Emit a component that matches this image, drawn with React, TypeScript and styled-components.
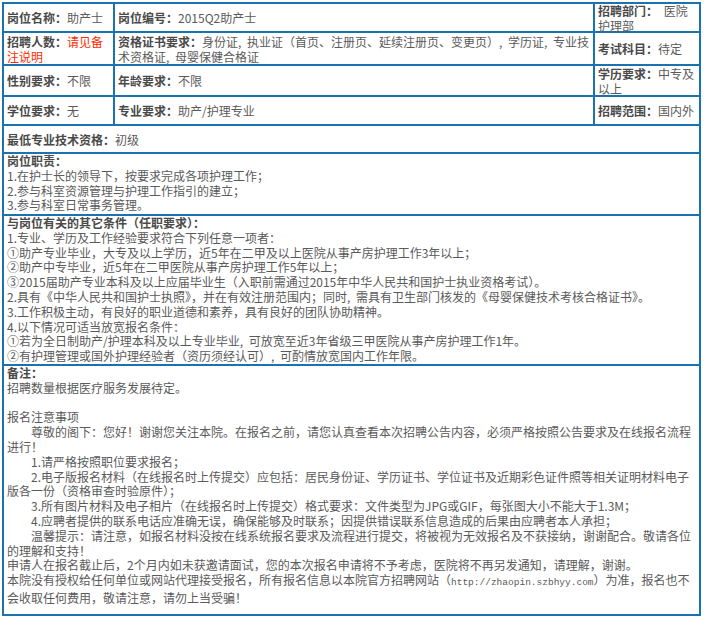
import React from "react";
import styled, { createGlobalStyle } from "styled-components";

const Global = createGlobalStyle`
  html, body { margin: 0; padding: 0; background: #fff; }
  body {
    font-family: "Noto Sans CJK SC", "Noto Sans", sans-serif;
    font-size: 12px;
    color: #555;
    word-spacing: 3px;
  }
`;

const Page = styled.div`
  padding: 2px;
`;

const Sheet = styled.div`
  display: grid;
  grid-template-columns: 109px 478px 104px;
  grid-template-rows: 27px 31px 29px 27px 26px 60px 148px 248px;
  gap: 2px;
  padding: 2px;
  width: max-content;
  background: #1a72b0;
`;

const Cell = styled.div<{ $wide?: boolean; $top?: boolean }>`
  grid-column: ${(p) => (p.$wide ? "1 / -1" : "auto")};
  background: #fff;
  display: flex;
  align-items: ${(p) => (p.$top ? "flex-start" : "center")};
  padding: 0 3px;
  min-width: 0;
  overflow: visible;
`;

const CellText = styled.div`
  line-height: 15px;
  width: 100%;
`;

const Block = styled.div`
  line-height: 14.8px;
  width: 100%;
`;

const Label = styled.span`
  font-weight: 700;
  color: #4a4a4a;
`;

const Value = styled.span<{ $red?: boolean }>`
  color: ${(p) => (p.$red ? "#ff2a00" : "#5a5a5a")};
`;

const Line = styled.div<{ $indent?: boolean }>`
  color: #5a5a5a;
  text-indent: ${(p) => (p.$indent ? "24px" : "0")};
  min-height: 14.8px;
`;

const Url = styled.span`
  font-family: "Liberation Mono", monospace;
  font-size: 9.5px;
  word-spacing: 0;
`;

const Field = ({ label, value, red }: { label: string; value: React.ReactNode; red?: boolean }) => (
  <CellText>
    <Label>{label}</Label>
    <Value $red={red}>{value}</Value>
  </CellText>
);

export default function App() {
  return (
    <Page>
      <Global />
      <Sheet>
        <Cell><Field label="岗位名称：" value="助产士" /></Cell>
        <Cell><Field label="岗位编号：" value="2015Q2助产士" /></Cell>
        <Cell><Field label="招聘部门： " value="医院护理部" /></Cell>

        <Cell><Field label="招聘人数：" value="请见备注说明" red /></Cell>
        <Cell>
          <Field
            label="资格证书要求："
            value="身份证, 执业证（首页、注册页、延续注册页、变更页）, 学历证, 专业技术资格证, 母婴保健合格证"
          />
        </Cell>
        <Cell><Field label="考试科目：" value="待定" /></Cell>

        <Cell><Field label="性别要求：" value="不限" /></Cell>
        <Cell><Field label="年龄要求：" value="不限" /></Cell>
        <Cell><Field label="学历要求：" value="中专及以上" /></Cell>

        <Cell><Field label="学位要求：" value="无" /></Cell>
        <Cell><Field label="专业要求：" value="助产/护理专业" /></Cell>
        <Cell><Field label="招聘范围：" value="国内外" /></Cell>

        <Cell $wide><Field label="最低专业技术资格：" value="初级" /></Cell>

        <Cell $wide $top>
          <Block>
            <Label>岗位职责：</Label>
            <Line>1.在护士长的领导下，按要求完成各项护理工作；</Line>
            <Line>2.参与科室资源管理与护理工作指引的建立；</Line>
            <Line>3.参与科室日常事务管理。</Line>
          </Block>
        </Cell>

        <Cell $wide $top>
          <Block>
            <Label>与岗位有关的其它条件（任职要求）：</Label>
            <Line>1.专业、学历及工作经验要求符合下列任意一项者：</Line>
            <Line>①助产专业毕业，大专及以上学历，近5年在二甲及以上医院从事产房护理工作3年以上；</Line>
            <Line>②助产中专毕业，近5年在二甲医院从事产房护理工作5年以上；</Line>
            <Line>③2015届助产专业本科及以上应届毕业生（入职前需通过2015年中华人民共和国护士执业资格考试）。</Line>
            <Line>2.具有《中华人民共和国护士执照》，并在有效注册范围内；同时, 需具有卫生部门核发的《母婴保健技术考核合格证书》。</Line>
            <Line>3.工作积极主动，有良好的职业道德和素养，具有良好的团队协助精神。</Line>
            <Line>4.以下情况可适当放宽报名条件：</Line>
            <Line>①若为全日制助产/护理本科及以上专业毕业, 可放宽至近3年省级三甲医院从事产房护理工作1年。</Line>
            <Line>②有护理管理或国外护理经验者（资历须经认可）, 可酌情放宽国内工作年限。</Line>
          </Block>
        </Cell>

        <Cell $wide $top>
          <Block>
            <Label>备注：</Label>
            <Line>招聘数量根据医疗服务发展待定。</Line>
            <Line />
            <Line>报名注意事项</Line>
            <Line $indent>尊敬的阁下：您好！谢谢您关注本院。在报名之前，请您认真查看本次招聘公告内容，必须严格按照公告要求及在线报名流程进行！</Line>
            <Line $indent>1.请严格按照职位要求报名；</Line>
            <Line $indent>2.电子版报名材料（在线报名时上传提交）应包括：居民身份证、学历证书、学位证书及近期彩色证件照等相关证明材料电子版各一份（资格审查时验原件）；</Line>
            <Line $indent>3.所有图片材料及电子相片（在线报名时上传提交）格式要求：文件类型为JPG或GIF，每张图大小不能大于1.3M；</Line>
            <Line $indent>4.应聘者提供的联系电话应准确无误，确保能够及时联系；因提供错误联系信息造成的后果由应聘者本人承担；</Line>
            <Line $indent>温馨提示：请注意，如报名材料没按在线系统报名要求及流程进行提交，将被视为无效报名及不获接纳，谢谢配合。敬请各位的理解和支持！</Line>
            <Line>申请人在报名截止后，2个月内如未获邀请面试，您的本次报名申请将不予考虑，医院将不再另发通知，请理解，谢谢。</Line>
            <Line>本院没有授权给任何单位或网站代理接受报名，所有报名信息以本院官方招聘网站（<Url>http://zhaopin.szbhyy.com</Url>）为准，报名也不会收取任何费用，敬请注意，请勿上当受骗！</Line>
          </Block>
        </Cell>
      </Sheet>
    </Page>
  );
}
